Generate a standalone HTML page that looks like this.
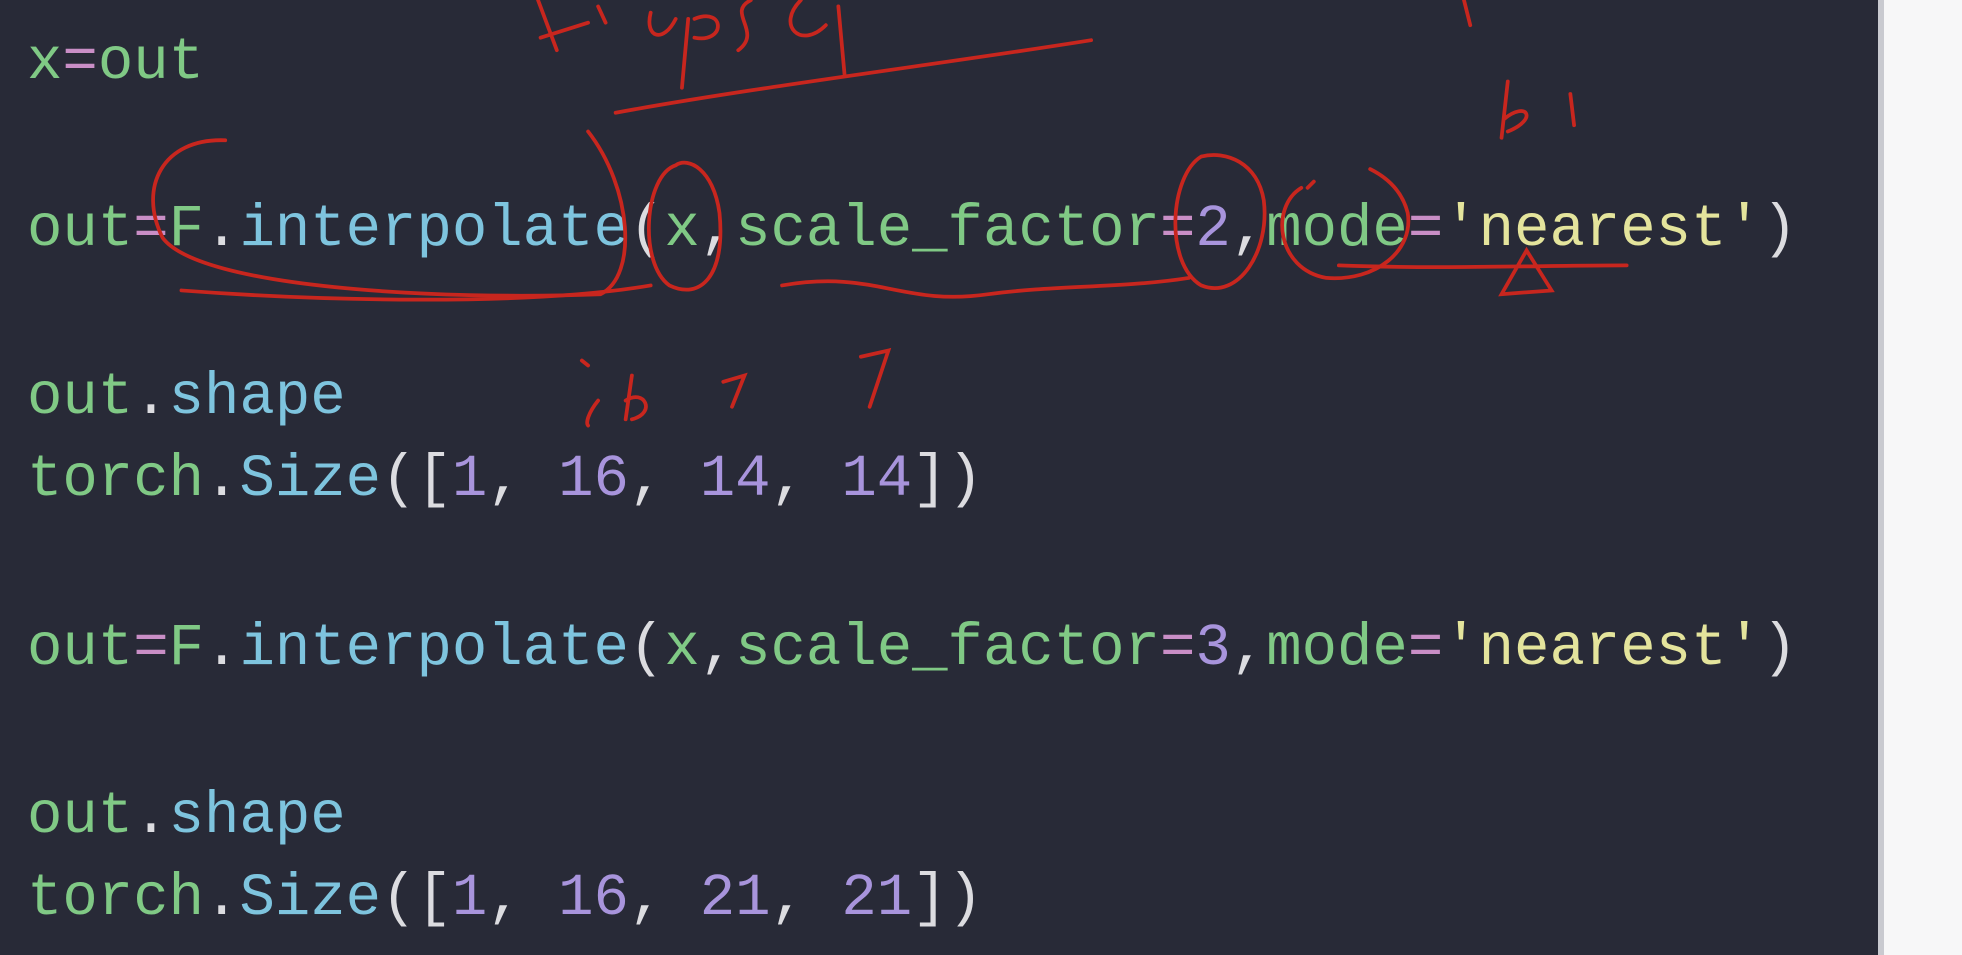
<!DOCTYPE html>
<html><head><meta charset="utf-8"><style>
html,body{margin:0;padding:0;width:1962px;height:955px;overflow:hidden;background:#f7f7f8}
#panel{position:absolute;left:0;top:0;width:1878px;height:955px;background:#282a37}
#edge{position:absolute;left:1878px;top:0;width:6px;height:955px;background:#c9cad0}
.l{position:absolute;left:27px;font-family:"Liberation Mono",monospace;font-size:59px;line-height:59px;white-space:pre;color:#80c985}
.g{color:#80c985}.b{color:#7ec4de}.p{color:#a894dc}.y{color:#e4e49c}.w{color:#dcdce0}.k{color:#c98ec6}
svg{position:absolute;left:0;top:0}
</style></head><body>
<div id="panel"></div><div id="edge"></div>
<div class="l" style="top:33px"><span class="g">x</span><span class="k">=</span><span class="g">out</span></div>
<div class="l" style="top:200px"><span class="g">out</span><span class="k">=</span><span class="g">F</span><span class="w">.</span><span class="b">interpolate</span><span class="w">(</span><span class="g">x</span><span class="w">,</span><span class="g">scale_factor</span><span class="k">=</span><span class="p">2</span><span class="w">,</span><span class="g">mode</span><span class="k">=</span><span class="y">'nearest'</span><span class="w">)</span></div>
<div class="l" style="top:368px"><span class="g">out</span><span class="w">.</span><span class="b">shape</span></div>
<div class="l" style="top:450px"><span class="g">torch</span><span class="w">.</span><span class="b">Size</span><span class="w">([</span><span class="p">1</span><span class="w">, </span><span class="p">16</span><span class="w">, </span><span class="p">14</span><span class="w">, </span><span class="p">14</span><span class="w">])</span></div>
<div class="l" style="top:619px"><span class="g">out</span><span class="k">=</span><span class="g">F</span><span class="w">.</span><span class="b">interpolate</span><span class="w">(</span><span class="g">x</span><span class="w">,</span><span class="g">scale_factor</span><span class="k">=</span><span class="p">3</span><span class="w">,</span><span class="g">mode</span><span class="k">=</span><span class="y">'nearest'</span><span class="w">)</span></div>
<div class="l" style="top:787px"><span class="g">out</span><span class="w">.</span><span class="b">shape</span></div>
<div class="l" style="top:869px"><span class="g">torch</span><span class="w">.</span><span class="b">Size</span><span class="w">([</span><span class="p">1</span><span class="w">, </span><span class="p">16</span><span class="w">, </span><span class="p">21</span><span class="w">, </span><span class="p">21</span><span class="w">])</span></div>
<svg width="1962" height="955" viewBox="0 0 1568 763" fill="none" stroke="#c8261e" stroke-width="3" stroke-linecap="round">
<path d="M430 0 L445 40 M432 30 L470 18 M478 5 L484 18"/>
<path d="M520 10 C515 30 530 35 540 15 M550 15 L545 70 M555 15 C580 5 580 35 555 30 M600 0 C580 10 610 25 590 40 M640 0 C620 20 640 40 660 20 M670 5 L675 60"/>
<path d="M492 90 C600 70 760 50 872 32"/>
<path d="M1170 0 L1175 20 M1205 65 L1200 110 M1202 95 C1220 80 1230 95 1205 105 M1255 75 L1258 100"/>
<path d="M180 112 C130 110 110 150 130 190 C160 230 350 240 480 235 C510 220 505 150 470 105"/>
<path d="M145 232 C250 240 420 245 520 228"/>
<path d="M540 132 C515 140 510 210 535 228 C560 240 580 220 575 170 C570 135 550 125 540 132"/>
<path d="M625 228 C700 215 720 245 790 235 C840 228 900 230 950 222"/>
<path d="M960 125 C935 140 930 210 960 228 C990 240 1015 200 1010 160 C1005 130 980 120 960 125"/>
<path d="M1040 150 C1015 165 1020 215 1060 222 C1100 225 1130 200 1125 170 C1120 150 1105 140 1095 135 M1045 150 L1050 145"/>
<path d="M1070 212 C1150 215 1230 212 1300 212 M1220 200 L1200 235 L1240 232 Z"/>
<path d="M465 288 L470 292 M478 320 C470 330 468 338 470 340 M505 300 L500 335 M500 320 C515 310 525 330 505 335 M578 305 L595 300 L585 325 M688 285 L710 280 L695 325"/>
</svg>
</body></html>
